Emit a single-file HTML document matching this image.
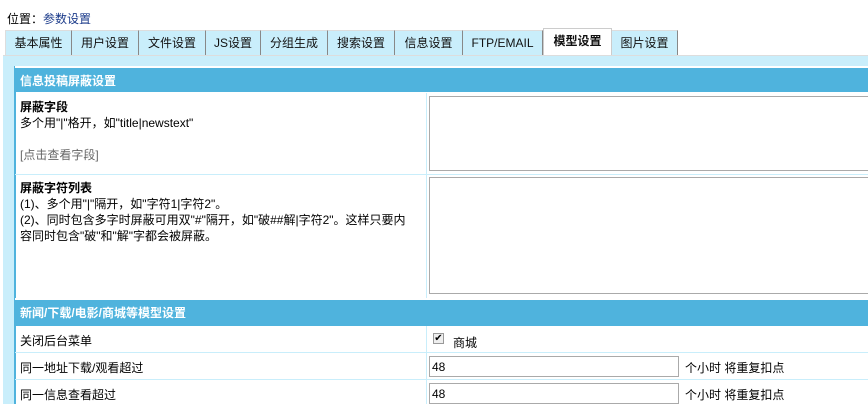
<!DOCTYPE html>
<html><head><meta charset="utf-8"><style>
*{margin:0;padding:0;box-sizing:border-box}
body{width:868px;height:404px;overflow:hidden;background:#fff;font:12px "Liberation Sans","Noto Sans CJK SC",sans-serif;color:#000;position:relative}
.a{position:absolute}
.tab{position:absolute;top:30px;height:25px;background:#c9eefb;border-right:1px solid #888;border-top:1px solid #ddd;line-height:24px;text-align:center;font-size:12px;color:#111}
.hd{position:absolute;left:15px;width:853px;height:26px;background:#4fb3dd;color:#fff;font-weight:bold;line-height:26px;padding-left:5px;border-top:2px solid #fff}
.ln{position:absolute;left:15px;width:853px;height:1px;background:#c9eefb}
.t{position:absolute;left:20px;line-height:16px}
.inp{position:absolute;left:429px;width:250px;height:21px;border:1px solid #aaa;background:#fff;line-height:20px;padding-left:2px}
</style></head><body>
<div class="a" style="left:7px;top:10px;">位置：<span style="color:#1a3a8a">参数设置</span></div>
<div class="tab" style="left:5px;width:67px;border-left:1px solid #ddd">基本属性</div>
<div class="tab" style="left:72px;width:67px">用户设置</div>
<div class="tab" style="left:139px;width:67px">文件设置</div>
<div class="tab" style="left:206px;width:55px">JS设置</div>
<div class="tab" style="left:261px;width:67px">分组生成</div>
<div class="tab" style="left:328px;width:67px">搜索设置</div>
<div class="tab" style="left:395px;width:68px">信息设置</div>
<div class="tab" style="left:463px;width:80px">FTP/EMAIL</div>
<div class="tab" style="left:543px;top:28px;height:28px;width:69px;background:#fff;border:1px solid #ccc;border-bottom:none;font-weight:bold;line-height:24px">模型设置</div>
<div class="tab" style="left:612px;width:66px">图片设置</div>
<div class="a" style="left:3px;top:55px;width:865px;height:349px;background:#c9eefb;border-top:1px solid #ddd"></div>
<div class="a" style="left:14px;top:66px;width:854px;height:338px;background:#fff;border-left:2px solid #4fb3dd"></div>
<div class="hd" style="top:66px;">信息投稿屏蔽设置</div>
<div class="a" style="left:426px;top:93px;width:1px;height:206px;background:#c9eefb"></div>
<div class="t" style="top:99px"><b>屏蔽字段</b><br>多个用"|"格开，如"title|newstext"<br><br><span style="color:#666">[点击查看字段]</span></div>
<div class="a" style="left:429px;top:96px;width:440px;height:75px;border:1px solid #aaa"></div>
<div class="ln" style="top:174px"></div>
<div class="t" style="top:180px;width:394px"><b>屏蔽字符列表</b><br>(1)、多个用"|"隔开，如"字符1|字符2"。<br>(2)、同时包含多字时屏蔽可用双"#"隔开，如"破##解|字符2"。这样只要内容同时包含"破"和"解"字都会被屏蔽。</div>
<div class="a" style="left:429px;top:177px;width:440px;height:117px;border:1px solid #aaa"></div>
<div class="hd" style="top:298px;height:28px;line-height:26px;border-top:2px solid #fff">新闻/下载/电影/商城等模型设置</div>
<div class="a" style="left:426px;top:326px;width:1px;height:78px;background:#c9eefb"></div>
<div class="t" style="top:333px">关闭后台菜单</div>
<div class="a" style="left:433px;top:333px;width:11px;height:11px;border:1px solid #999;background:#eee;font-size:10px;line-height:9px;text-align:center">✔</div>
<div class="a" style="left:453px;top:334px">商城</div>
<div class="ln" style="top:352px"></div>
<div class="t" style="top:360px">同一地址下载/观看超过</div>
<div class="inp" style="top:356px">48</div>
<div class="a" style="left:685px;top:359px">个小时 将重复扣点</div>
<div class="ln" style="top:379px"></div>
<div class="t" style="top:387px">同一信息查看超过</div>
<div class="inp" style="top:383px">48</div>
<div class="a" style="left:685px;top:386px">个小时 将重复扣点</div>
</body></html>
